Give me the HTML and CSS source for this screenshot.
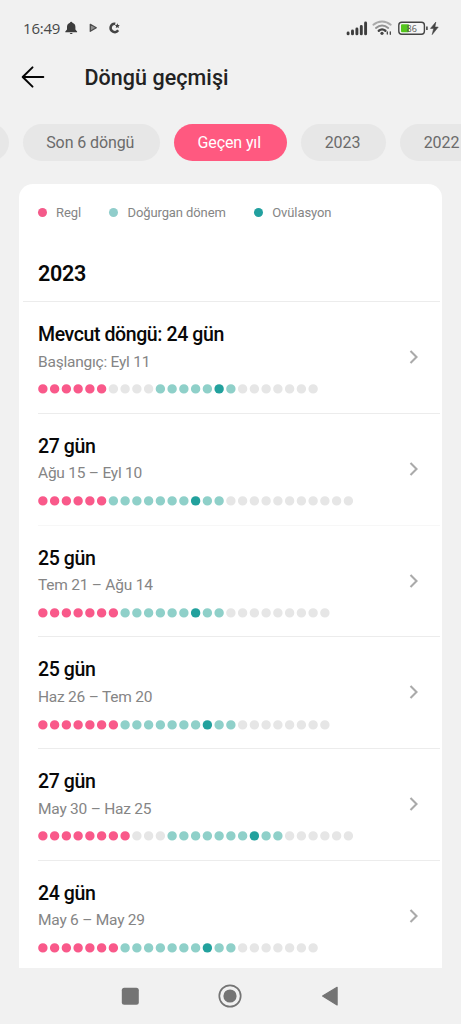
FILE: index.html
```
<!DOCTYPE html>
<html lang="tr">
<head>
<meta charset="utf-8">
<title>Döngü geçmişi</title>
<link rel="stylesheet" href="styles.css">
</head>
<body>
<div class="screen">
  <div class="status">
    <span class="clock">16:49</span>
    <svg class="status-left" viewBox="0 0 58 14" width="58" height="14">
      <path d="M6.200 .8c.7 0 1.100.4 1.200 1 2 .6 3 2.200 3 4.200v2.600l1.700 1.800v.8H.3v-.8L2 8.600V6c0-2 1-3.600 3-4.200.1-.6.5-1 1.200-1zM4.800 12h2.800c-.1.700-.7 1.100-1.400 1.100S4.900 12.700 4.800 12z" fill="#3c3c3c"/>
      <path d="M25.300 3.300l6 3.400-6 3.600z" fill="#909090" stroke="#4c4c4c" stroke-width="1.300" stroke-linejoin="round"/>
      <path d="M50.300 2.700a4.200 4.200 0 1 0 2.900 6.600" fill="none" stroke="#444" stroke-width="2.500"/>
      <path d="M52.300 2.300l.8 1.600 1.700.2-1.200 1.200.3 1.700-1.600-.8-1.500.8.3-1.700-1.200-1.200 1.700-.2z" fill="#444"/>
    </svg>
    <svg class="status-right" viewBox="0 0 94 16" width="94" height="16">
      <path d="M2.100 14.500v-1M6.500 14.500v-3M10.900 14.500v-5M15.300 14.500V7M19.600 14.500V3.500" transform="translate(0 -.6)" stroke="#3d3d3d" stroke-width="2.900" stroke-linecap="round"/>
      <g fill="none" stroke-linecap="round">
        <path d="M27.400 4.700c5-4.400 12.300-4.400 17.300 0" stroke="#aaa" stroke-width="2"/>
        <path d="M30 7.900c3.700-3.100 8.500-3.100 12.200 0" stroke="#929292" stroke-width="2"/>
        <path d="M32.800 10.700c2-1.600 4.600-1.600 6.600 0" stroke="#444" stroke-width="2.400"/>
        <path d="M41.300 12v2M44.300 11.800v2.500" stroke="#444" stroke-width="1.300"/>
      </g>
      <circle cx="36" cy="13.300" r="1.600" fill="#444"/>
      <rect x="52.800" y="2.200" width="25.600" height="12" rx="3" fill="#f5f5f5" stroke="#444" stroke-width="1.400"/>
      <rect x="55" y="4.200" width="8" height="8" rx="1" fill="#54c51c"/>
      <text x="60.600" y="11.900" class="charge">86</text>
      <path d="M80.900 6.500v3.600" stroke="#444" stroke-width="1.600"/>
      <path d="M89.800 2.100l-5.300 6.300h3.200l-1.500 6.200 6-7.500h-3.300z" fill="#444" stroke="#444" stroke-width=".6"/>
    </svg>
  </div>
  <header class="header">
    <svg class="back" viewBox="0 0 24 24" width="24" height="24"><path d="M11.500 2.400L1.700 12l9.800 9.600M1.900 12H22.300" fill="none" stroke="#050505" stroke-width="2" stroke-linecap="round" stroke-linejoin="round"/></svg>
    <h1 class="title">Döngü geçmişi</h1>
  </header>
  <nav class="chips">
    <span class="chip chip-edge"></span>
    <span class="chip chip-six">Son 6 döngü</span>
    <span class="chip chip-last active">Geçen yıl</span>
    <span class="chip chip-year">2023</span>
    <span class="chip chip-year">2022</span>
  </nav>
  <main class="card">
    <div class="legend">
      <span class="key"><i class="dot dot-period"></i>Regl</span>
      <span class="key"><i class="dot dot-fertile"></i>Doğurgan dönem</span>
      <span class="key"><i class="dot dot-ovulation"></i>Ovülasyon</span>
    </div>
    <h2 class="year">2023</h2>
    <ul class="cycles">
      <li class="cycle">
        <h3 class="length">Mevcut döngü: 24 gün</h3>
        <p class="range">Başlangıç: Eyl 11</p>
        <svg class="days" viewBox="0 0 27 1"><path class="plain" d="M6.500 .5h3.010M17.500 .5h6.010"/><path class="period" d="M.5 .5h5.010"/><path class="fertile" d="M10.500 .5h4.010M16.500 .5h.01"/><path class="ovulation" d="M15.500 .5h.01"/></svg>
        <svg class="chevron" viewBox="0 0 10 16"><path d="M1.500 2l6 6-6 6"/></svg>
      </li>
      <li class="cycle">
        <h3 class="length">27 gün</h3>
        <p class="range">Ağu 15 – Eyl 10</p>
        <svg class="days" viewBox="0 0 27 1"><path class="plain" d="M16.500 .5h10.010"/><path class="period" d="M.5 .5h5.010"/><path class="fertile" d="M6.500 .5h6.010M14.500 .5h1.010"/><path class="ovulation" d="M13.500 .5h.01"/></svg>
        <svg class="chevron" viewBox="0 0 10 16"><path d="M1.500 2l6 6-6 6"/></svg>
      </li>
      <li class="cycle faint">
        <h3 class="length">25 gün</h3>
        <p class="range">Tem 21 – Ağu 14</p>
        <svg class="days" viewBox="0 0 27 1"><path class="plain" d="M16.500 .5h8.010"/><path class="period" d="M.5 .5h6.010"/><path class="fertile" d="M7.500 .5h5.010M14.500 .5h1.010"/><path class="ovulation" d="M13.500 .5h.01"/></svg>
        <svg class="chevron" viewBox="0 0 10 16"><path d="M1.500 2l6 6-6 6"/></svg>
      </li>
      <li class="cycle">
        <h3 class="length">25 gün</h3>
        <p class="range">Haz 26 – Tem 20</p>
        <svg class="days" viewBox="0 0 27 1"><path class="plain" d="M17.500 .5h7.010"/><path class="period" d="M.5 .5h6.010"/><path class="fertile" d="M7.500 .5h6.010M15.500 .5h1.010"/><path class="ovulation" d="M14.500 .5h.01"/></svg>
        <svg class="chevron" viewBox="0 0 10 16"><path d="M1.500 2l6 6-6 6"/></svg>
      </li>
      <li class="cycle">
        <h3 class="length">27 gün</h3>
        <p class="range">May 30 – Haz 25</p>
        <svg class="days" viewBox="0 0 27 1"><path class="plain" d="M8.500 .5h2.010M21.500 .5h5.010"/><path class="period" d="M.5 .5h7.010"/><path class="fertile" d="M11.500 .5h6.010M19.500 .5h1.010"/><path class="ovulation" d="M18.500 .5h.01"/></svg>
        <svg class="chevron" viewBox="0 0 10 16"><path d="M1.500 2l6 6-6 6"/></svg>
      </li>
      <li class="cycle">
        <h3 class="length">24 gün</h3>
        <p class="range">May 6 – May 29</p>
        <svg class="days" viewBox="0 0 27 1"><path class="plain" d="M17.500 .5h6.010"/><path class="period" d="M.5 .5h6.010"/><path class="fertile" d="M7.500 .5h6.010M15.500 .5h1.010"/><path class="ovulation" d="M14.500 .5h.01"/></svg>
        <svg class="chevron" viewBox="0 0 10 16"><path d="M1.500 2l6 6-6 6"/></svg>
      </li>
    </ul>
  </main>
  <footer class="navbar">
    <svg viewBox="0 0 24 24" width="24" height="24"><rect x="3.800" y="3.800" width="17" height="17" rx="2.500" fill="#747474"/></svg>
    <svg viewBox="0 0 24 24" width="24" height="24"><circle cx="12" cy="12" r="10.700" fill="none" stroke="#747474" stroke-width="1.700"/><circle cx="12" cy="12" r="6.600" fill="#747474"/></svg>
    <svg viewBox="0 0 24 24" width="24" height="24"><path d="M4.600 12L19.100 3.300v17.600z" fill="#747474" stroke="#747474" stroke-width="1.200" stroke-linejoin="round"/></svg>
  </footer>
</div>
</body>
</html>
```
FILE: styles.css
```
* { box-sizing: border-box; margin: 0; padding: 0; }
body { font-family: Roboto, "Liberation Sans", sans-serif; background: #f1f1f1; }
svg { display: block; flex: none; }
.screen { width: 461px; height: 1024px; overflow: hidden; display: flex; flex-direction: column; background: #f1f1f1; }

.status { height: 48px; flex: none; display: flex; align-items: flex-start; padding: 20px 21px 0 23px; }
.clock { width: 42px; font-size: 15px; line-height: 17px; letter-spacing: -.2px; font-family: "Open Sans", sans-serif; color: #484848; white-space: nowrap; }
.status-left { margin-top: 1px; }
.status-right { margin-left: auto; }
.charge { font: 9px "Open Sans", sans-serif; fill: #555; }

.header { height: 60px; flex: none; display: flex; align-items: center; padding: 0 0 2px 21px; }
.title { margin-left: 39.500px; padding-top: 2px; font-size: 21.500px; line-height: 28px; letter-spacing: .05px; font-weight: 500; color: #222; white-space: nowrap; }

.chips { height: 76px; flex: none; display: flex; gap: 14px; padding-top: 16px; overflow: hidden; }
.chip { flex: none; height: 37px; padding-right: 2px; border-radius: 19px; background: #e7e7e7; color: #6b6b6b; font-size: 16px; line-height: 38px; letter-spacing: -.1px; text-align: center; white-space: nowrap; }
.chip-edge { width: 60px; margin-left: -51px; }
.chip-six { width: 136.500px; }
.chip-last { width: 113.500px; }
.chip-year { width: 85px; }
.active { background: #ff5980; color: #fff; }

.card { height: 784px; flex: none; width: 423px; margin-left: 19px; background: #fff; border-radius: 14px 14px 0 0; overflow: hidden; }
.legend { display: flex; gap: 28px; height: 57px; padding-left: 18.500px; align-items: center; font-size: 13px; letter-spacing: -.1px; color: #858585; }
.key { display: flex; align-items: center; gap: 9px; white-space: nowrap; }
.dot { width: 9.500px; height: 9.500px; border-radius: 50%; }
.dot-period { background: #f45a8a; }
.dot-fertile { background: #90cdcb; }
.dot-ovulation { background: #22a09f; }
.year { height: 60px; padding-left: 19px; font-size: 21.500px; line-height: 66px; letter-spacing: -.3px; font-weight: 600; color: #080808; }

.cycles { list-style: none; margin-right: 2px; }
.cycle { height: 111.800px; margin-left: 19px; border-top: 1px solid #ececec; display: grid; grid-template-columns: 1fr 31px; grid-template-rows: 24px 29px 26px; align-content: start; padding-top: 21px; align-items: center; }
.cycle:first-child { margin-left: 4px; padding-left: 15px; }
.faint { border-top-color: #f7f7f7; }
.length { font-size: 19.500px; line-height: 24px; letter-spacing: -.4px; font-weight: 500; color: #080808; white-space: nowrap; }
.range { font-size: 15.500px; line-height: 20px; letter-spacing: -.23px; color: #858585; white-space: nowrap; }
.days { grid-row: 3; width: 317.250px; height: 11.750px; margin-left: -.8px; overflow: visible; }
.days path { fill: none; stroke-width: .8; stroke-linecap: round; stroke-dasharray: 0 1; }
.days .plain { stroke: #e6e6e6; }
.days .period { stroke: #f9598a; }
.days .fertile { stroke: #8fd0c9; }
.days .ovulation { stroke: #22a19d; }
.chevron { grid-column: 2; grid-row: 1 / 4; width: 10px; height: 16px; margin-top: -11px; }
.chevron path { fill: none; stroke: #aaa; stroke-width: 2.100; }

.navbar { height: 56px; flex: none; display: flex; justify-content: center; gap: 76px; padding: 16px 2px 0 0; }
```
